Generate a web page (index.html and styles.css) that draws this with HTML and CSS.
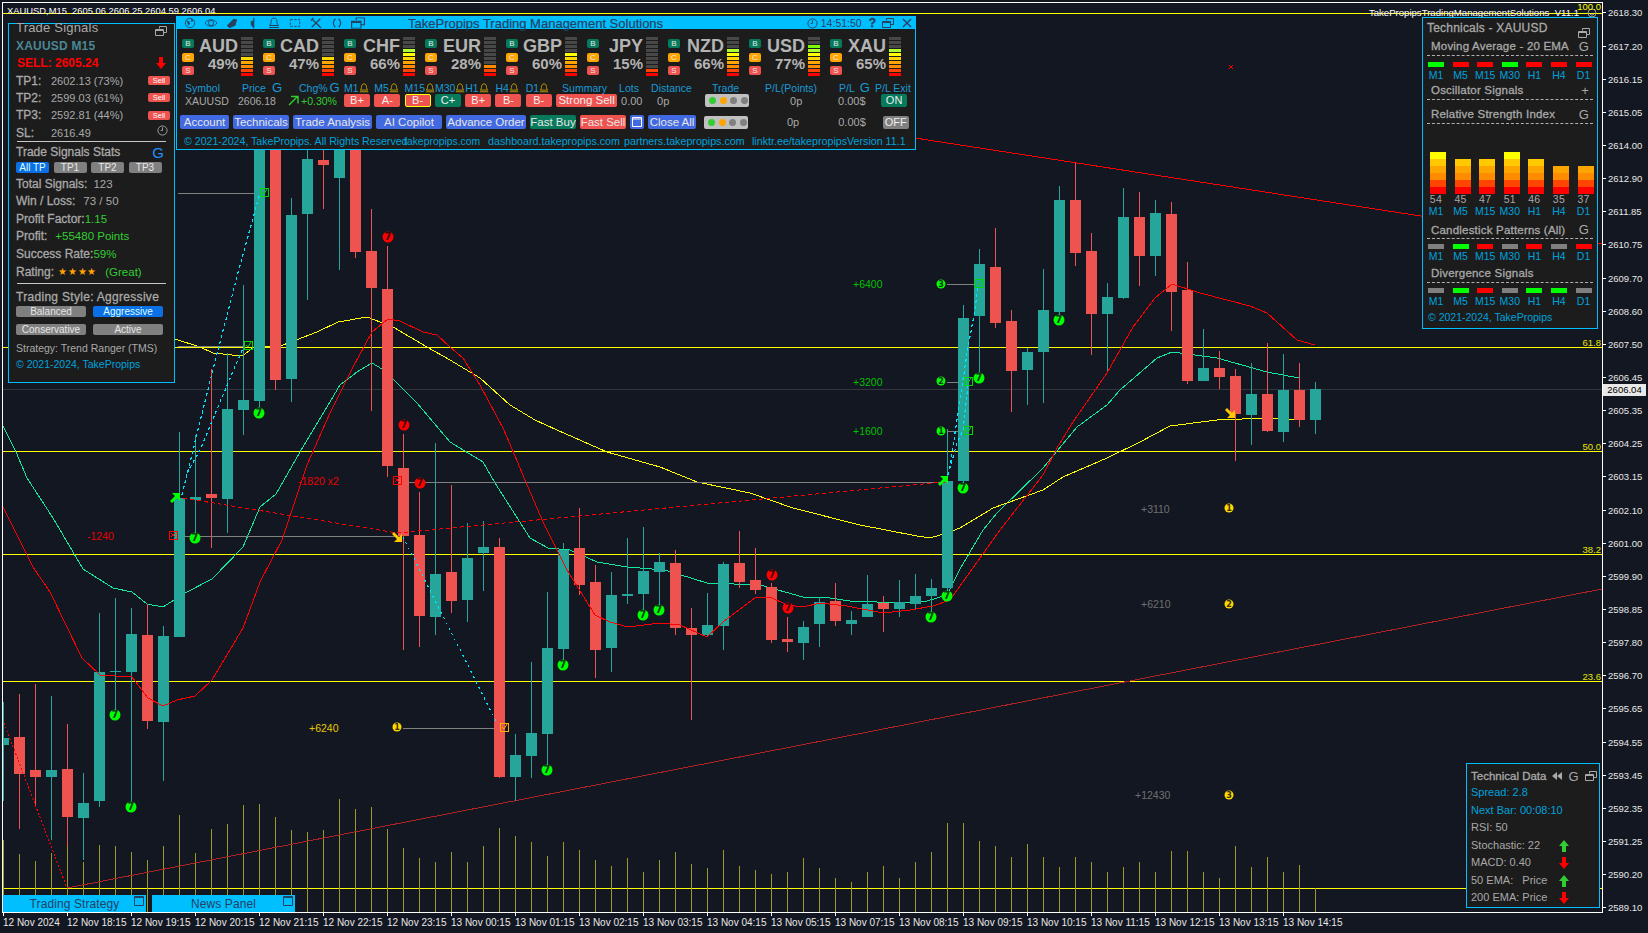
FILE: index.html
```html
<!DOCTYPE html>
<html lang="en">
<head>
  <meta charset="UTF-8" />
  <title>XAUUSD,M15 – TakePropips Trading Management Solutions</title>
  <link rel="stylesheet" href="styles.css">
</head>
<body>
  <svg class="defs" width="0" height="0">
    <symbol id="restore" viewBox="0 0 12 10"><path d="M4.500 2.500V.5h7v6h-3M.5 3.500h8v6h-8zM.5 4.500h8" fill="none" stroke="currentColor"/></symbol>
    <symbol id="bell" viewBox="0 0 12 12"><path d="M6 1c2.300 0 3 2 3 4.500 0 1.500 1 2.500 1.500 3h-9C2 8 3 7 3 5.500 3 3 3.700 1 6 1zM1 10.500h10" fill="none" stroke="currentColor"/></symbol>
    <symbol id="up" viewBox="0 0 10 12"><path d="M5 0l5 6H7v6H3V6H0z" fill="currentColor"/></symbol>
    <symbol id="down" viewBox="0 0 10 12"><path d="M5 12L0 6h3V0h4v6h3z" fill="currentColor"/></symbol>
    <symbol id="clock" viewBox="0 0 12 12"><circle cx="6" cy="6" r="5" fill="none" stroke="currentColor"/><path d="M6 2.500V6h-2" fill="none" stroke="currentColor"/></symbol>
  </svg>

  <div class="terminal">
    <div class="plot">
      <svg id="chart" class="chart" viewBox="3 3 1599 909" width="1599" height="909"></svg>
      <div class="plot-title">XAUUSD,M15&nbsp; 2605.06 2606.25 2604.59 2606.04</div>
      <div class="plot-ea">TakePropipsTradingManagementSolutions_V11.1</div>
      <svg class="ea-smile" viewBox="0 0 10 10"><circle cx="5" cy="5" r="4" fill="none" stroke="#a0a0a0"/><path d="M3 6c1 1.500 3 1.500 4 0" fill="none" stroke="#a0a0a0"/></svg>
      <div class="fib fib-100">100.0</div>
      <div class="fib fib-61">61.8</div>
      <div class="fib fib-50">50.0</div>
      <div class="fib fib-38">38.2</div>
      <div class="fib fib-23">23.6</div>
    </div>

    <div id="prices" class="price-axis">
      <span>2618.30</span><span>2617.20</span><span>2616.15</span><span>2615.05</span>
      <span>2614.00</span><span>2612.90</span><span>2611.85</span><span>2610.75</span>
      <span>2609.70</span><span>2608.60</span><span>2607.50</span><span>2606.45</span>
      <span>2605.35</span><span>2604.25</span><span>2603.15</span><span>2602.10</span>
      <span>2601.00</span><span>2599.90</span><span>2598.85</span><span>2597.80</span>
      <span>2596.70</span><span>2595.65</span><span>2594.55</span><span>2593.45</span>
      <span>2592.35</span><span>2591.25</span><span>2590.20</span><span>2589.10</span>
    </div>

    <div class="time-axis">
      <span>12 Nov 2024</span><span>12 Nov 18:15</span><span>12 Nov 19:15</span><span>12 Nov 20:15</span>
      <span>12 Nov 21:15</span><span>12 Nov 22:15</span><span>12 Nov 23:15</span><span>13 Nov 00:15</span>
      <span>13 Nov 01:15</span><span>13 Nov 02:15</span><span>13 Nov 03:15</span><span>13 Nov 04:15</span>
      <span>13 Nov 05:15</span><span>13 Nov 07:15</span><span>13 Nov 08:15</span><span>13 Nov 09:15</span>
      <span>13 Nov 10:15</span><span>13 Nov 11:15</span><span>13 Nov 12:15</span><span>13 Nov 13:15</span>
      <span>13 Nov 14:15</span>
    </div>

    <div class="price-tag">2606.04</div>

    <!-- left panel -->
    <aside class="panel signals">
      <div class="sg-title"><span>Trade Signals</span><svg class="ico-restore"><use href="#restore"/></svg></div>
      <div class="sg-row sg-symbol">XAUUSD M15</div>
      <div class="sg-row sg-sell">SELL: 2605.24<svg class="ico-arrow red"><use href="#down"/></svg></div>
      <div class="sg-row"><b class="lbl-tp">TP1:</b><span>2602.13 (73%)</span><em class="tag-sell">Sell</em></div>
      <div class="sg-row"><b class="lbl-tp">TP2:</b><span>2599.03 (61%)</span><em class="tag-sell">Sell</em></div>
      <div class="sg-row"><b class="lbl-tp">TP3:</b><span>2592.81 (44%)</span><em class="tag-sell">Sell</em></div>
      <div class="sg-row"><b class="lbl-tp">SL:</b><span>2616.49</span><svg class="ico-clock"><use href="#clock"/></svg></div>
      <hr class="sg-rule">
      <div class="sg-stats"><b>Trade Signals Stats</b><span class="g-blue">G</span></div>
      <div class="tp-tabs">
        <span class="chip on">All TP</span><span class="chip">TP1</span><span class="chip">TP2</span><span class="chip">TP3</span>
      </div>
      <div class="sg-stat"><b>Total Signals:</b><span class="ml6">123</span></div>
      <div class="sg-stat"><b>Win / Loss:</b><span class="ml8">73 / 50</span></div>
      <div class="sg-stat"><b>Profit Factor:</b><span class="green">1.15</span></div>
      <div class="sg-stat"><b>Profit:</b><span class="green ml8">+55480 Points</span></div>
      <div class="sg-stat"><b>Success Rate:</b><span class="green">59%</span></div>
      <div class="sg-stat"><b>Rating:</b><span class="stars">★★★★</span><span class="green ml8">(Great)</span></div>
      <hr class="sg-rule rule-2">
      <div class="sg-style"><b>Trading Style: Aggressive</b></div>
      <div class="style-btns">
        <span class="chip">Balanced</span><span class="chip on">Aggressive</span>
        <span class="chip">Conservative</span><span class="chip">Active</span>
      </div>
      <div class="sg-strategy">Strategy: Trend Ranger (TMS)</div>
      <div class="copy">© 2021-2024, TakePropips</div>
    </aside>

    <!-- top panel -->
    <section class="panel dash">
      <header class="dash-bar">
        <div class="bar-icons">
          <svg viewBox="0 0 14 14"><circle cx="7" cy="7" r="5.500" fill="none" stroke="currentColor"/><path d="M3 4l3 1 1 3-2 2zM8 2l3 2-2 2z" fill="currentColor"/></svg>
          <svg viewBox="0 0 16 14"><path d="M1 7c3-5 11-5 14 0-3 5-11 5-14 0z" fill="none" stroke="currentColor"/><circle cx="8" cy="7" r="3" fill="none" stroke="currentColor"/></svg>
          <svg viewBox="0 0 14 14"><path d="M1 10L9 2l4 1-2 7-7 3z" fill="currentColor"/></svg>
          <svg viewBox="0 0 14 14"><path d="M5 5h3V1v12l-3-4z" fill="currentColor" stroke="currentColor"/></svg>
          <svg viewBox="0 0 12 12"><use href="#bell"/></svg>
          <svg viewBox="0 0 14 14"><rect x="1.500" y="3" width="11" height="8" fill="none" stroke="currentColor" stroke-dasharray="3 1.500"/></svg>
          <svg viewBox="0 0 14 14"><path d="M2 2l10 10M12 2L2 12M1 4l3-3M10 10l3 3" fill="none" stroke="currentColor" stroke-width="1.500"/></svg>
          <svg viewBox="0 0 14 14"><path d="M5 2C2 5 2 9 5 12M9 2c3 3 3 7 0 10" fill="none" stroke="currentColor" stroke-width="1.500"/></svg>
          <svg viewBox="0 0 12 10"><use href="#restore"/></svg>
        </div>
        <div class="bar-title">TakePropips Trading Management Solutions</div>
        <div class="bar-right">
          <svg class="ico-clock"><use href="#clock"/></svg><span class="bar-time">14:51:50</span>
          <b class="bar-help">?</b>
          <svg class="ico-restore"><use href="#restore"/></svg>
          <svg class="ico-close" viewBox="0 0 10 10"><path d="M1 1l8 8M9 1L1 9" stroke="currentColor" stroke-width="1.400"/></svg>
        </div>
      </header>

      <div class="tiles">
        <div class="tile"><div class="bcs"><i class="b">B</i><i class="c">C</i><i class="s">S</i></div><div class="cur"><b>AUD</b><b class="pct">49%</b></div><div class="meter"><i style="height:20px"></i></div></div>
        <div class="tile"><div class="bcs"><i class="b">B</i><i class="c">C</i><i class="s">S</i></div><div class="cur"><b>CAD</b><b class="pct">47%</b></div><div class="meter"><i style="height:20px"></i></div></div>
        <div class="tile"><div class="bcs"><i class="b">B</i><i class="c">C</i><i class="s">S</i></div><div class="cur"><b>CHF</b><b class="pct">66%</b></div><div class="meter"><i style="height:28px"></i></div></div>
        <div class="tile"><div class="bcs"><i class="b">B</i><i class="c">C</i><i class="s">S</i></div><div class="cur"><b>EUR</b><b class="pct">28%</b></div><div class="meter"><i style="height:12px"></i></div></div>
        <div class="tile"><div class="bcs"><i class="b">B</i><i class="c">C</i><i class="s">S</i></div><div class="cur"><b>GBP</b><b class="pct">60%</b></div><div class="meter"><i style="height:24px"></i></div></div>
        <div class="tile"><div class="bcs"><i class="b">B</i><i class="c">C</i><i class="s">S</i></div><div class="cur"><b>JPY</b><b class="pct">15%</b></div><div class="meter"><i style="height:8px"></i></div></div>
        <div class="tile"><div class="bcs"><i class="b">B</i><i class="c">C</i><i class="s">S</i></div><div class="cur"><b>NZD</b><b class="pct">66%</b></div><div class="meter"><i style="height:28px"></i></div></div>
        <div class="tile"><div class="bcs"><i class="b">B</i><i class="c">C</i><i class="s">S</i></div><div class="cur"><b>USD</b><b class="pct">77%</b></div><div class="meter"><i style="height:32px"></i></div></div>
        <div class="tile"><div class="bcs"><i class="b">B</i><i class="c">C</i><i class="s">S</i></div><div class="cur"><b>XAU</b><b class="pct">65%</b></div><div class="meter"><i style="height:28px"></i></div></div>
      </div>

      <div class="grid-head">
        <span class="pad-symbol">Symbol</span>
        <span>Price<u class="g-price">G</u></span>
        <span>Chg%<u class="g-chg">G</u></span>
        <span class="tf">M1<svg><use href="#bell"/></svg></span>
        <span class="tf">M5<svg><use href="#bell"/></svg></span>
        <span class="tf">M15<svg><use href="#bell"/></svg></span>
        <span class="tf">M30<svg><use href="#bell"/></svg></span>
        <span class="tf">H1<svg><use href="#bell"/></svg></span>
        <span class="tf">H4<svg><use href="#bell"/></svg></span>
        <span class="tf">D1<svg><use href="#bell"/></svg></span>
        <span class="pad-sum">Summary</span>
        <span>Lots</span>
        <span>Distance</span>
        <span class="pad-trade">Trade</span>
        <span>P/L(Points)</span>
        <span>P/L<u>G</u></span>
        <span>P/L Exit</span>
      </div>

      <div class="grid-vals">
        <span class="val pad-sym2">XAUUSD</span>
        <span class="val pad-price2">2606.18</span>
        <span class="chg"><svg viewBox="0 0 11 11"><path d="M1 10L9 2M3 1.500h7v7" fill="none" stroke="currentColor" stroke-width="1.400"/></svg>+0.30%</span>
        <em class="grade">B+</em><em class="grade">A-</em><em class="grade hot">B-</em><em class="grade buy">C+</em><em class="grade">B+</em><em class="grade">B-</em><em class="grade">B-</em>
        <em class="summary">Strong Sell</em>
        <span class="val pad-lots">0.00</span>
        <span class="val pad-dist">0p</span>
        <span class="lights lights-top"><i class="g"></i><i class="o"></i><i></i><i></i></span>
        <span class="val pad-zero">0p</span>
        <span class="val pad-pl">0.00$</span>
        <em class="exit on">ON</em>
      </div>

      <div class="btn-row">
        <a class="btn w49">Account</a>
        <a class="btn w56">Technicals</a>
        <a class="btn w79">Trade Analysis</a>
        <a class="btn w66">AI Copilot</a>
        <a class="btn w80">Advance Order</a>
        <a class="btn w46 buy">Fast Buy</a>
        <a class="btn w46 sell">Fast Sell</a>
        <a class="btn w14"><svg viewBox="0 0 10 10"><path d="M.5.5h9v9h-9zM.5 2h9" fill="none" stroke="#fff"/></svg></a>
        <a class="btn w48">Close All</a>
        <span class="lights"><i class="g"></i><i class="o"></i><i></i><i></i></span>
        <span class="val pad-zero">0p</span>
        <span class="val pad-pl2">0.00$</span>
        <em class="exit">OFF</em>
      </div>

      <div class="dash-foot">
        <span class="w217">© 2021-2024, TakePropips. All Rights Reserved</span>
        <span class="w87">takepropips.com</span>
        <span class="w136">dashboard.takepropips.com</span>
        <span class="w128">partners.takepropips.com</span>
        <span class="w95">linktr.ee/takepropips</span>
        <span>Version 11.1</span>
      </div>
    </section>

    <!-- right panel -->
    <aside class="panel tech">
      <div class="tech-title"><b>Technicals - XAUUSD</b><svg class="ico-restore"><use href="#restore"/></svg></div>
      <div class="tech-head h18"><b>Moving Average - 20 EMA</b><span>G</span></div>
      <div class="sigs mt6"><i class="up"></i><i></i><i></i><i class="up"></i><i></i><i></i><i></i></div>
      <div class="tfs"><span>M1</span><span>M5</span><span>M15</span><span>M30</span><span>H1</span><span>H4</span><span>D1</span></div>
      <div class="tech-head h17"><b>Oscillator Signals</b><span>+</span></div>
      <div class="tech-head h17 mt6"><b>Relative Strength Index</b><span>G</span></div>
      <div class="rsi">
        <i style="height:42px"></i><i style="height:35px"></i><i style="height:35px"></i><i style="height:42px"></i><i style="height:35px"></i><i style="height:28px"></i><i style="height:28px"></i>
      </div>
      <div class="rsi-vals"><span>54</span><span>45</span><span>47</span><span>51</span><span>46</span><span>35</span><span>37</span></div>
      <div class="tfs tfs-tight"><span>M1</span><span>M5</span><span>M15</span><span>M30</span><span>H1</span><span>H4</span><span>D1</span></div>
      <div class="tech-head h16 mt4"><b>Candlestick Patterns (All)</b><span>G</span></div>
      <div class="sigs mt5"><i class="na"></i><i class="up"></i><i></i><i class="na"></i><i></i><i class="na"></i><i></i></div>
      <div class="tfs"><span>M1</span><span>M5</span><span>M15</span><span>M30</span><span>H1</span><span>H4</span><span>D1</span></div>
      <div class="tech-head h18 mt1"><b>Divergence Signals</b></div>
      <div class="sigs mt5"><i class="na"></i><i class="up"></i><i></i><i class="na"></i><i class="up"></i><i class="up"></i><i class="na"></i></div>
      <div class="tfs"><span>M1</span><span>M5</span><span>M15</span><span>M30</span><span>H1</span><span>H4</span><span>D1</span></div>
      <div class="copy tech-copy">© 2021-2024, TakePropips</div>
    </aside>

    <!-- bottom right panel -->
    <aside class="panel data">
      <div class="data-title"><b>Technical Data</b>
        <svg class="ico-rew" viewBox="0 0 10 8"><path d="M5 0v8L0 4zM10 0v8L5 4z" fill="currentColor"/></svg>
        <span>G</span>
        <svg class="ico-restore"><use href="#restore"/></svg>
      </div>
      <div class="data-row blue">Spread: 2.8</div>
      <div class="data-row blue">Next Bar: 00:08:10</div>
      <div class="data-row">RSI: 50</div>
      <div class="data-row">Stochastic: 22<svg class="ico-arrow lime"><use href="#up"/></svg></div>
      <div class="data-row">MACD: 0.40<svg class="ico-arrow red"><use href="#down"/></svg></div>
      <div class="data-row">50 EMA: &nbsp; Price<svg class="ico-arrow lime"><use href="#up"/></svg></div>
      <div class="data-row">200 EMA: Price<svg class="ico-arrow red"><use href="#down"/></svg></div>
    </aside>

    <div class="tab tab-strategy">Trading Strategy<svg viewBox="0 0 10 10"><path d="M.5.5h9v9h-9zM.5 1.500h9" fill="none" stroke="currentColor"/></svg></div>
    <div class="tab tab-news">News Panel<svg viewBox="0 0 10 10"><path d="M.5.5h9v9h-9zM.5 1.500h9" fill="none" stroke="currentColor"/></svg></div>
  </div>

  <script src="chart.js"></script>
</body>
</html>
```

FILE: styles.css
```css
* { box-sizing: border-box; }

body {
  margin: 0;
  background: #131722;
  font-family: "Liberation Sans", Arial, sans-serif;
  font-size: 11px;
  color: #a9a9a9;
}

b { font-weight: normal; -webkit-text-stroke: 0.3px currentColor; }
em { font-style: normal; }
u { text-decoration: none; }
.defs { position: absolute; }

.terminal {
  position: relative;
  width: 1648px;
  height: 933px;
  overflow: hidden;
  display: grid;
  grid-template-columns: 1603px 45px;
  grid-template-rows: 913px 20px;
}

/* chart */
.plot {
  position: relative;
  margin: 2px 0 0 2px;
  border: 1px solid #fff;
}
.chart { display: block; }
.plot-title {
  position: absolute;
  left: 4px;
  top: 2px;
  color: #fff;
  font-size: 9.400px;
  line-height: 11px;
  white-space: nowrap;
}
.plot-ea {
  position: absolute;
  right: 23px;
  top: 4px;
  color: #fff;
  font-size: 9.600px;
  line-height: 11px;
  white-space: nowrap;
}
.ea-smile {
  position: absolute;
  right: 5px;
  top: 5px;
  width: 10px;
  height: 10px;
}
.fib {
  position: absolute;
  right: 1px;
  color: #e6e600;
  font-size: 9.500px;
  line-height: 11px;
}
.fib-100 { top: -2px; color: #ffff00; }
.fib-61 { top: 334px; }
.fib-50 { top: 438px; }
.fib-38 { top: 541px; }
.fib-23 { top: 668px; }

/* axes */
.price-axis {
  grid-column: 2;
  grid-row: 1 / span 2;
  margin-top: -3.600px;
  color: #e8e8e8;
  font-size: 9.500px;
}
.price-axis span {
  display: flex;
  align-items: center;
  gap: 2px;
  height: 33.150px;
}
.price-axis span::before {
  content: "";
  width: 3px;
  height: 1px;
  background: #fff;
}
.time-axis {
  grid-column: 1;
  grid-row: 2;
  display: flex;
  padding-left: 3px;
  color: #e8e8e8;
  font-size: 10px;
}
.time-axis span {
  position: relative;
  flex: 0 0 64px;
  padding-top: 3px;
  white-space: nowrap;
  line-height: 13px;
}
.time-axis span::before {
  content: "";
  position: absolute;
  left: 0;
  top: 0;
  width: 1px;
  height: 3px;
  background: #fff;
}
.price-tag {
  position: absolute;
  left: 1603px;
  top: 384px;
  width: 43px;
  height: 12px;
  background: #e8e8e8;
  color: #000;
  font-size: 9.500px;
  line-height: 12px;
  text-align: center;
}

/* shared panel bits */
.panel {
  position: absolute;
  background: #1c1c1c;
  border: 1px solid #00bfff;
}
.copy { color: #00a2dc; font-size: 10.500px; }
.green { color: #32cd32; }
.ico-restore { width: 12px; height: 10px; color: #a9a9a9; }
.ico-clock { width: 11px; height: 11px; }
.ico-arrow { width: 10px; height: 12px; }
.ico-arrow.red { color: #f00; }
.ico-arrow.lime { color: #32cd32; }

/* trade signals */
.signals {
  left: 8px;
  top: 23px;
  width: 167px;
  height: 360px;
  padding-left: 7px;
}
.sg-title {
  display: flex;
  justify-content: space-between;
  height: 13.500px;
  padding-right: 7px;
  font-size: 13px;
  line-height: 8px;
  letter-spacing: 0.200px;
}
.sg-title .ico-restore { margin-top: 2px; }
.sg-row {
  position: relative;
  display: flex;
  align-items: center;
  height: 17.300px;
  font-size: 11px;
}
.sg-symbol { color: #4b8794; font-size: 12px; font-weight: bold; letter-spacing: 0.200px; }
.sg-sell { color: #f00; font-size: 12px; font-weight: bold; padding-left: 1px; }
.sg-sell .ico-arrow { position: absolute; right: 8px; top: 2px; }
.lbl-tp { width: 35px; font-size: 12px; }
.tag-sell {
  position: absolute;
  left: 132px;
  top: 4px;
  width: 22px;
  height: 9px;
  background: #ef5350;
  border-radius: 2px;
  color: #fff;
  font-size: 7.500px;
  line-height: 9px;
  text-align: center;
}
.sg-row .ico-clock { position: absolute; left: 141px; top: 1px; }
.sg-rule {
  width: 149px;
  height: 1px;
  margin: 0 0 0 1px;
  border: 0;
  background: #c8c8c8;
}
.rule-2 { margin-top: 3px; }
.sg-stats {
  display: flex;
  align-items: center;
  justify-content: space-between;
  height: 20px;
  padding-right: 10px;
  font-size: 12px;
}
.g-blue { color: #1e90ff; font-size: 15px; }
.tp-tabs { display: flex; gap: 4.500px; }
.chip {
  flex: 0 0 33px;
  height: 11px;
  background: #808080;
  border-radius: 2px;
  color: #e6e6e6;
  font-size: 10px;
  line-height: 11px;
  text-align: center;
}
.chip.on { background: #0b70e6; color: #dff; }
.sg-stat {
  display: flex;
  align-items: center;
  height: 17.600px;
  font-size: 11.500px;
}
.sg-stat b { font-size: 12px; }
.tp-tabs + .sg-stat { margin-top: 1.500px; }
.ml6 { margin-left: 6px; }
.ml8 { margin-left: 8px; }
.stars { margin-left: 4px; color: #ffa500; font-size: 10px; letter-spacing: 0.800px; }
.sg-style { height: 22px; padding-top: 6px; font-size: 12px; letter-spacing: 0.300px; }
.style-btns { display: flex; flex-wrap: wrap; gap: 7px; width: 150px; }
.style-btns .chip { flex: 0 0 70px; }
.sg-strategy { margin-top: 7px; font-size: 10.500px; line-height: 13px; }
.signals .copy { margin-top: 3px; line-height: 13px; }

/* top dashboard */
.dash {
  left: 176px;
  top: 16px;
  width: 740px;
  height: 134px;
}
.dash-bar {
  position: relative;
  display: flex;
  align-items: center;
  height: 12px;
  background: #00bfff;
  color: #24415f;
}
.bar-icons { display: flex; align-items: center; gap: 7px; padding-left: 6px; }
.bar-icons svg { width: 14px; height: 12px; }
.bar-title {
  position: absolute;
  left: 231px;
  top: 0;
  font-size: 13px;
  line-height: 13px;
  -webkit-text-stroke: 0.200px currentColor;
  white-space: nowrap;
}
.bar-right {
  position: absolute;
  right: 3px;
  top: 0;
  display: flex;
  align-items: center;
  gap: 3px;
  height: 12px;
}
.bar-time { font-size: 10.500px; }
.bar-help { font-size: 12px; font-weight: bold; margin: 0 3px 0 4px; }
.bar-right .ico-restore { color: #24415f; margin-right: 5px; }
.ico-close { width: 10px; height: 10px; }

.tiles {
  display: grid;
  grid-template-columns: repeat(9, 81px);
  height: 49px;
  padding-left: 5px;
}
.tile { display: flex; }
.bcs {
  display: flex;
  flex-direction: column;
  gap: 4.500px;
  width: 12px;
  padding-top: 10px;
}
.bcs i {
  height: 9px;
  border-radius: 2px;
  color: #e8e8e8;
  font-size: 8px;
  font-style: normal;
  line-height: 9px;
  text-align: center;
}
.bcs .b { background: #067a5a; }
.bcs .c { background: #ffa500; }
.bcs .s { background: #ef5350; }
.cur {
  display: flex;
  flex-direction: column;
  align-items: flex-end;
  width: 44px;
  padding-top: 8px;
  color: #b4b4b4;
  font-size: 18px;
  line-height: 18px;
}
.cur b { font-weight: bold; -webkit-text-stroke: 0; }
.cur .pct { font-size: 15px; line-height: 15px; margin-top: 1px; }
.meter {
  position: relative;
  width: 12px;
  height: 40px;
  margin: 7px 0 0 3px;
  background: #484848;
}
.meter i {
  position: absolute;
  left: 0;
  right: 0;
  bottom: 0;
  background: linear-gradient(to top,
    #f00 0 4px, #ff4500 4px 8px, #ff8c00 8px 12px, #ffa500 12px 16px,
    #ffd700 16px 20px, #ff0 20px 24px, #adff2f 24px 28px, #7cfc00 28px 32px) bottom / 100% 32px no-repeat;
}
.meter::after {
  content: "";
  position: absolute;
  inset: 0;
  background: repeating-linear-gradient(to top, transparent 0 3px, #1c1c1c 3px 4px);
}

.grid-head, .grid-vals {
  display: grid;
  grid-template-columns: 62px 57px 45px repeat(7, 30.300px) 63px 32px 50px 64px 74px 36px 34px;
  align-items: center;
  padding-left: 3px;
}
.grid-head {
  height: 13px;
  margin-top: 2px;
  color: #1a9ad6;
  font-size: 10.500px;
  white-space: nowrap;
}
.grid-head span { display: flex; align-items: center; }
.grid-head u { margin-left: 5px; font-size: 13px; }
.grid-head .g-price { margin-left: 6px; }
.grid-head .g-chg { margin-left: 2px; }
.pad-symbol { padding-left: 5px; }
.pad-sum { padding-left: 6px; }
.pad-trade { padding-left: 11px; }
.grid-head svg { width: 10px; height: 10px; margin-left: 0; color: #d4aa00; flex: none; }
.grid-vals { height: 13px; margin-top: 1px; }
.val { color: #a9a9a9; white-space: nowrap; }
.pad-sym2 { padding-left: 5px; font-size: 10.500px; }
.pad-price2 { margin-left: -4px; font-size: 10.500px; }
.pad-lots { padding-left: 2px; }
.pad-dist { padding-left: 6px; }
.pad-zero { padding-left: 25px; }
.pad-pl { margin-left: -1px; }
.chg { display: flex; align-items: center; gap: 2px; margin-left: -11px; color: #32cd32; white-space: nowrap; font-size: 10.500px; }
.chg svg { width: 11px; height: 11px; }
.grade {
  width: 26px;
  height: 13px;
  background: #ef5350;
  border-radius: 2px;
  color: #f0f0f0;
  line-height: 13px;
  text-align: center;
}
.grade.hot { border: 1px solid #ff0; line-height: 11px; }
.grade.buy { background: #067a5a; }
.summary {
  width: 61px;
  height: 13px;
  background: #ef5350;
  border-radius: 2px;
  color: #f0f0f0;
  font-size: 11.500px;
  line-height: 13px;
  text-align: center;
  white-space: nowrap;
}
.lights {
  display: flex;
  align-items: center;
  gap: 3.500px;
  width: 44px;
  height: 13px;
  padding-left: 4px;
  background: #c0c0c0;
  border-radius: 2px;
}
.lights-top { margin-left: 4px; }
.lights i { width: 7px; height: 7px; border-radius: 50%; background: #808080; }
.lights .g { background: #32cd32; }
.lights .o { background: #ffa500; }
.exit {
  width: 26px;
  height: 13px;
  background: #808080;
  border-radius: 2px;
  color: #eee;
  font-size: 11px;
  line-height: 13px;
  text-align: center;
}
.exit.on { background: #067a5a; margin-left: 6px; }

.btn-row {
  display: flex;
  align-items: center;
  gap: 4px;
  height: 14px;
  margin-top: 8px;
  padding-left: 3px;
}
.btn {
  display: flex;
  align-items: center;
  justify-content: center;
  height: 14px;
  overflow: hidden;
  background: #4169e1;
  border-radius: 2px;
  color: #e6e6e6;
  font-size: 11.500px;
  white-space: nowrap;
}
.btn.buy { background: #067a5a; }
.btn.sell { background: #ef5350; }
.btn svg { width: 10px; height: 10px; flex: none; }
.w49 { flex: 0 0 49px; }
.w56 { flex: 0 0 56px; }
.w79 { flex: 0 0 79px; }
.w66 { flex: 0 0 66px; }
.w80 { flex: 0 0 80px; }
.w46 { flex: 0 0 46px; }
.w14 { flex: 0 0 14px; }
.w48 { flex: 0 0 48px; }
.btn-row .lights { margin-left: 4px; }
.btn-row .pad-zero { padding-left: 35px; }
.pad-pl2 { margin-left: 35px; }
.btn-row .exit { margin-left: 13px; }

.dash-foot {
  display: flex;
  margin-top: 6px;
  padding-left: 7px;
  color: #00a2dc;
  font-size: 10.700px;
  line-height: 13px;
  white-space: nowrap;
}
.dash-foot span { min-width: 0; }
.w217 { flex: 0 0 220px; letter-spacing: -0.050px; }
.w87 { flex: 0 0 84px; font-size: 10.400px; }
.w136 { flex: 0 0 136px; }
.w128 { flex: 0 0 128px; }
.w95 { flex: 0 0 95px; }

/* technicals */
.tech {
  left: 1422px;
  top: 17px;
  width: 176px;
  height: 312px;
  padding: 0 4px;
}
.tech-title {
  display: flex;
  justify-content: space-between;
  height: 19px;
  font-size: 12px;
  line-height: 20px;
  letter-spacing: 0.200px;
  padding-right: 3px;
}
.tech-title .ico-restore { margin-top: 10px; }
.tech-head {
  display: flex;
  justify-content: space-between;
  align-items: center;
  padding: 0 4px;
  border-bottom: 1px dashed #b0b0b0;
  font-size: 11.500px;
  letter-spacing: 0.200px;
}
.tech-head span { font-size: 13px; }
.h16 { height: 17px; }
.h17 { height: 18px; }
.h18 { height: 19px; }
.mt1 { margin-top: 1px; }
.mt4 { margin-top: 4px; }
.mt5 { margin-top: 5px; }
.mt6 { margin-top: 6px; }
.sigs, .tfs, .rsi, .rsi-vals {
  display: grid;
  grid-template-columns: repeat(7, 24.600px);
  padding-left: 1px;
}
.sigs { height: 5px; }
.sigs i { width: 16px; background: #f00; }
.sigs .up { background: #0f0; }
.sigs .na { background: #808080; }
.tfs { height: 13px; margin-top: 1.500px; color: #00a2dc; font-size: 10.500px; line-height: 13px; }
.tfs span, .rsi-vals span { width: 16px; display: flex; justify-content: center; }
.rsi { align-items: end; height: 70px; }
.rsi i {
  width: 16px;
  margin-left: 2px;
  background: linear-gradient(to top,
    #f00 0 7px, #ff4500 7px 14px, #ff8c00 14px 21px, #ffa500 21px 28px,
    #ffc800 28px 35px, #ff0 35px 42px) bottom / 100% 42px no-repeat;
}
.rsi-vals { height: 11px; color: #a9a9a9; font-size: 10.500px; line-height: 11px; letter-spacing: 0.300px; }
.tfs-tight { margin-top: 0; }
.tech-copy { margin-top: 2px; line-height: 15px; padding-left: 1px; }

/* technical data */
.data {
  left: 1466px;
  top: 763px;
  width: 134px;
  height: 145px;
  padding: 4px 4px 0;
}
.data-title {
  display: flex;
  align-items: center;
  height: 16px;
  font-size: 11.500px;
  white-space: nowrap;
}
.ico-rew { width: 10px; height: 8px; margin-left: 6px; flex: none; color: #a9a9a9; }
.data-title span { margin-left: 6px; font-size: 13px; }
.data-title .ico-restore { margin-left: 6px; flex: none; }
.data-row {
  position: relative;
  height: 17.500px;
  font-size: 11px;
  line-height: 17.500px;
  white-space: nowrap;
}
.data-row .ico-arrow { position: absolute; left: 88px; top: 3px; }
.data-row.blue { color: #00a2dc; }

/* bottom tabs */
.tab {
  position: absolute;
  top: 895px;
  display: flex;
  align-items: center;
  justify-content: center;
  width: 143px;
  height: 17px;
  background: #00bfff;
  color: #24415f;
  font-size: 12px;
  letter-spacing: 0.100px;
}
.tab svg { position: absolute; right: 2px; top: 1px; width: 10px; height: 10px; }
.tab-strategy { left: 3px; }
.tab-news { left: 152px; }
```

FILE: chart.js
```js
// XAUUSD M15 bars as [type, body top, body bottom, wick top, wick bottom] in screen pixels
const bars = [
  ["g",738,745,702,801],["r",737,774,694,829],["r",770,777,684,805],["g",770,777,696,840],
  ["r",769,817,724,846],["g",803,818,773,860],["g",672,801,613,807],["g",671,672,598,710],
  ["g",634,672,608,801],["r",635,721,604,729],["g",636,722,626,781],["g",498,637,432,637],
  ["g",497,500,435,533],["r",494,498,369,548],["g",409,499,353,533],["g",400,410,285,435],
  ["g",100,401,90,407],["r",100,380,90,390],["g",215,379,198,402],["g",159,214,130,300],
  ["r",160,165,150,209],["g",120,178,100,270],["r",120,252,100,258],["r",251,288,209,411],
  ["r",289,466,246,477],["r",468,536,434,650],["r",535,616,492,647],["g",574,617,443,635],
  ["r",572,601,485,613],["g",558,600,523,622],["g",547,553,521,591],["r",547,777,538,778],
  ["g",755,777,734,801],["g",733,756,662,778],["g",648,734,592,765],["g",550,649,543,660],
  ["r",548,585,508,595],["r",582,650,565,678],["g",595,648,572,672],["g",594,596,538,604],
  ["g",571,594,527,610],["g",562,572,553,605],["r",563,628,550,635],["r",628,635,608,720],
  ["g",625,635,593,637],["g",564,626,562,650],["r",563,582,531,588],["r",580,590,548,594],
  ["r",587,640,583,643],["r",639,642,617,652],["g",627,643,621,660],["g",602,624,597,647],
  ["r",601,621,583,626],["g",620,624,611,635],["g",604,617,575,617],["r",603,609,596,632],
  ["g",602,609,580,617],["g",596,604,574,609],["g",588,596,579,612],["g",481,588,429,592],
  ["g",318,481,305,483],["g",264,316,249,372],["r",267,323,228,328],["r",321,371,310,412],
  ["g",352,370,348,405],["g",310,352,269,403],["g",200,312,186,315],["r",200,253,163,266],
  ["r",251,314,233,355],["g",297,314,283,373],["g",217,298,188,299],["r",217,256,192,286],
  ["g",213,256,200,276],["r",214,292,202,331],["r",290,381,262,384],["g",368,381,329,381],
  ["r",368,377,351,389],["r",376,414,369,461],["g",394,415,363,445],["r",394,431,343,432],
  ["g",390,432,354,442],["r",390,420,363,427],["g",389,420,382,434]
];

const volumes = [840,854,861,853,846,862,845,846,852,860,846,815,853,829,824,805,804,817,830,832,830,799,809,807,829,
  848,858,862,852,862,846,828,836,842,856,842,850,860,866,858,872,860,852,864,868,850,866,870,874,872,858,868,878,882,
  872,866,878,862,852,823,823,841,846,857,844,857,867,857,862,872,867,862,872,851,851,872,878,846,867,857,872,865,888];

const greenMa = [[3,426],[16,452],[27,478],[53,518],[83,569],[113,588],[132,592],[147,604],[163,607],[185,593],[212,579],[243,547],[260,507],[276,494],[300,452],[340,385],[357,372],[372,363],[382,369],[393,379],[417,403],[450,442],[483,462],[495,483],[530,538],[548,548],[570,550],[597,562],[627,567],[665,570],[707,583],[760,585],[803,597],[823,597],[850,601],[903,603],[927,601],[947,595],[960,569],[983,530],[997,513],[1043,468],[1077,427],[1107,405],[1120,390],[1157,358],[1172,352],[1217,358],[1267,372],[1299,378]];
const yellowMa = [[150,330],[175,339],[200,347],[213,353],[242,356],[253,348],[283,345],[317,332],[338,322],[367,317],[393,327],[427,347],[450,360],[480,378],[510,405],[535,420],[557,430],[607,452],[660,467],[697,482],[750,493],[793,508],[860,525],[917,536],[930,538],[947,533],[960,528],[993,508],[1043,490],[1063,477],[1107,458],[1140,442],[1170,426],[1217,420],[1267,418],[1300,420]];
const redMa = [[3,507],[33,567],[50,592],[82,658],[100,675],[132,677],[148,698],[163,706],[177,700],[195,696],[212,680],[243,628],[260,582],[282,540],[307,465],[330,413],[353,367],[372,332],[388,319],[400,321],[423,332],[437,335],[450,347],[463,358],[480,385],[504,430],[525,480],[543,522],[567,570],[595,615],[610,622],[628,627],[660,623],[680,625],[707,637],[723,622],[755,598],[770,597],[787,605],[803,607],[820,603],[847,606],[883,613],[910,610],[933,606],[950,600],[960,586],[1000,530],[1043,475],[1057,448],[1073,422],[1107,373],[1133,327],[1155,298],[1172,284],[1200,293],[1250,306],[1267,313],[1297,340],[1315,345]];

const svg = document.getElementById("chart");
const NS = "http://www.w3.org/2000/svg";

function add(tag, attrs, text) {
  const el = document.createElementNS(NS, tag);
  for (const k in attrs) el.setAttribute(k, attrs[k]);
  if (text) el.textContent = text;
  svg.appendChild(el);
  return el;
}

// the terminal draws aliased lines, so everything stays crisp
function line(x1, y1, x2, y2, stroke) {
  add("line", { x1, y1, x2, y2, stroke, "stroke-width": 1, "shape-rendering": "crispEdges" });
}

function poly(points, stroke, extra) {
  add("polyline", Object.assign({ points: points.join(" "), fill: "none", stroke, "stroke-width": 1, "shape-rendering": "crispEdges" }, extra));
}

const barX = n => 3.5 + 16 * n;

// levels
[13.5, 347.5, 451.5, 554.5, 681.5, 888.5].forEach(y => line(3, y, 1602, y, "#ff0"));
line(3, 389.5, 1602, 389.5, "#33363c");

// volume
volumes.forEach((y, n) => line(barX(n), y, barX(n), 912, "#9a9a1e"));

// trend lines
line(67, 888, 1602, 589, "#b22222");
line(915, 138, 1602, 244, "#f00");

// moving averages that sit behind the bars
poly(greenMa, "#14e89c");
poly(yellowMa, "#ff0");

// trade connectors
const greyLines = [[178,193.5,260,193.5],[178,346.5,244,346.5],[178,536.5,395,536.5],[403,482.5,940,482.5],[403,728.5,500,728.5],[947,431.5,964,431.5],[947,382.5,964,382.5],[947,284.5,975,284.5],[947.5,431,947.5,481]];
greyLines.forEach(g => line(g[0], g[1], g[2], g[3], "#808080"));

// bars
bars.forEach((b, n) => {
  const color = b[0] === "g" ? "#26a69a" : "#ef5350";
  const x = barX(n);
  line(x, b[3], x, b[4], color);
  add("rect", { x: x - 5.5, y: b[1], width: 11, height: Math.max(b[2] - b[1], 1), fill: color });
});

poly(redMa, "#f00");

// arrows between entry and exit
const redDash = { "stroke-dasharray": "4 3" };
poly([[183,498],[397,533]], "#f00", redDash);
poly([[397,533],[945,482]], "#f00", redDash);
poly([[4,723],[67,888]], "#f00", { "stroke-dasharray": "2 2" });
const cyanDash = { "stroke-dasharray": "3 3", "stroke-width": 1.2 };
poly([[182,495],[195,442],[212,373],[238,273],[260,193]], "#00e5ff", cyanDash);
poly([[187,473],[200,450],[228,383],[243,348]], "#00e5ff", cyanDash);
poly([[403,537],[498,725]], "#00e5ff", { "stroke-dasharray": "2 4", "stroke-width": 1.2 });
poly([[948,475],[952,453],[958,413],[968,347],[975,310],[978,285]], "#00e5ff", cyanDash);
poly([[948,475],[957,443],[963,430],[968,385]], "#00e5ff", cyanDash);

// round "7" signals
function badge(x, y, fill, label, r, color) {
  add("circle", { cx: x, cy: y, r, fill });
  add("text", { x, y: y + r * 0.62, "text-anchor": "middle", "font-family": "DejaVu Sans", "font-size": r * 1.8, "font-weight": "bold", fill: color }, label);
}
[[115,715],[131,807],[195,538],[259,413],[563,665],[547,770],[643,615],[659,610],[931,617],[947,596],[963,488],[979,378],[1059,320]]
  .forEach(p => badge(p[0], p[1], "#0f0", "7", 5.5, "#14361a"));
[[388,237],[404,425],[420,483],[772,575],[788,608]]
  .forEach(p => badge(p[0], p[1], "#f00", "7", 5.5, "#3a0808"));

badge(941, 284, "#0f0", "3", 4.5, "#14361a");
badge(941, 381, "#0f0", "2", 4.5, "#14361a");
badge(941, 431, "#0f0", "1", 4.5, "#14361a");
badge(397, 727, "#ffd700", "1", 4.5, "#3a3000");
badge(1229, 508, "#ffd700", "1", 4.5, "#3a3000");
badge(1229, 604, "#ffd700", "2", 4.5, "#3a3000");
badge(1229, 795, "#ffd700", "3", 4.5, "#3a3000");

// take profit / stop loss boxes
function box(x, y, color, mark) {
  add("rect", { x: x - 4, y: y - 4, width: 8, height: 8, fill: "none", stroke: color, "shape-rendering": "crispEdges" });
  add("path", { d: mark, transform: `translate(${x - 4} ${y - 4})`, fill: "none", stroke: color });
}
const tick = "M2 4l2 2 3-5";
const cross = "M2 2l4 4M6 2l-4 4";
[[264,192],[248,345],[968,430],[968,381],[979,283]].forEach(p => box(p[0], p[1], "#00d800", tick));
box(504, 727, "#ffb000", tick);
[[173,535],[397,480]].forEach(p => box(p[0], p[1], "#f00", cross));

// entry arrows
function arrow(x, y, color, flip) {
  add("path", {
    d: "M0 10L5 5 2 2h8v8L7 7 2 12z",
    transform: `translate(${x - 5} ${y - 6})` + (flip ? " rotate(90 5 6)" : ""),
    fill: color
  });
}
arrow(175, 497, "#0f0");
arrow(943, 480, "#0f0");
arrow(398, 537, "#ffc800", true);
arrow(1231, 413, "#ffc800", true);
line(1229, 65, 1233, 69, "#f00");
line(1233, 65, 1229, 69, "#f00");

// profit labels
[[853,288,"+6400","#00c000"],[853,386,"+3200","#00c000"],[853,435,"+1600","#00c000"],
 [87,540,"-1240","#e80000"],[298,485,"-1820 x2","#e80000"],[309,732,"+6240","#e8c800"],
 [1141,513,"+3110","#707070"],[1141,608,"+6210","#707070"],[1135,799,"+12430","#707070"]]
  .forEach(l => add("text", { x: l[0], y: l[1], "font-family": "Liberation Sans", "font-size": 10.5, fill: l[3] }, l[2]));
```
